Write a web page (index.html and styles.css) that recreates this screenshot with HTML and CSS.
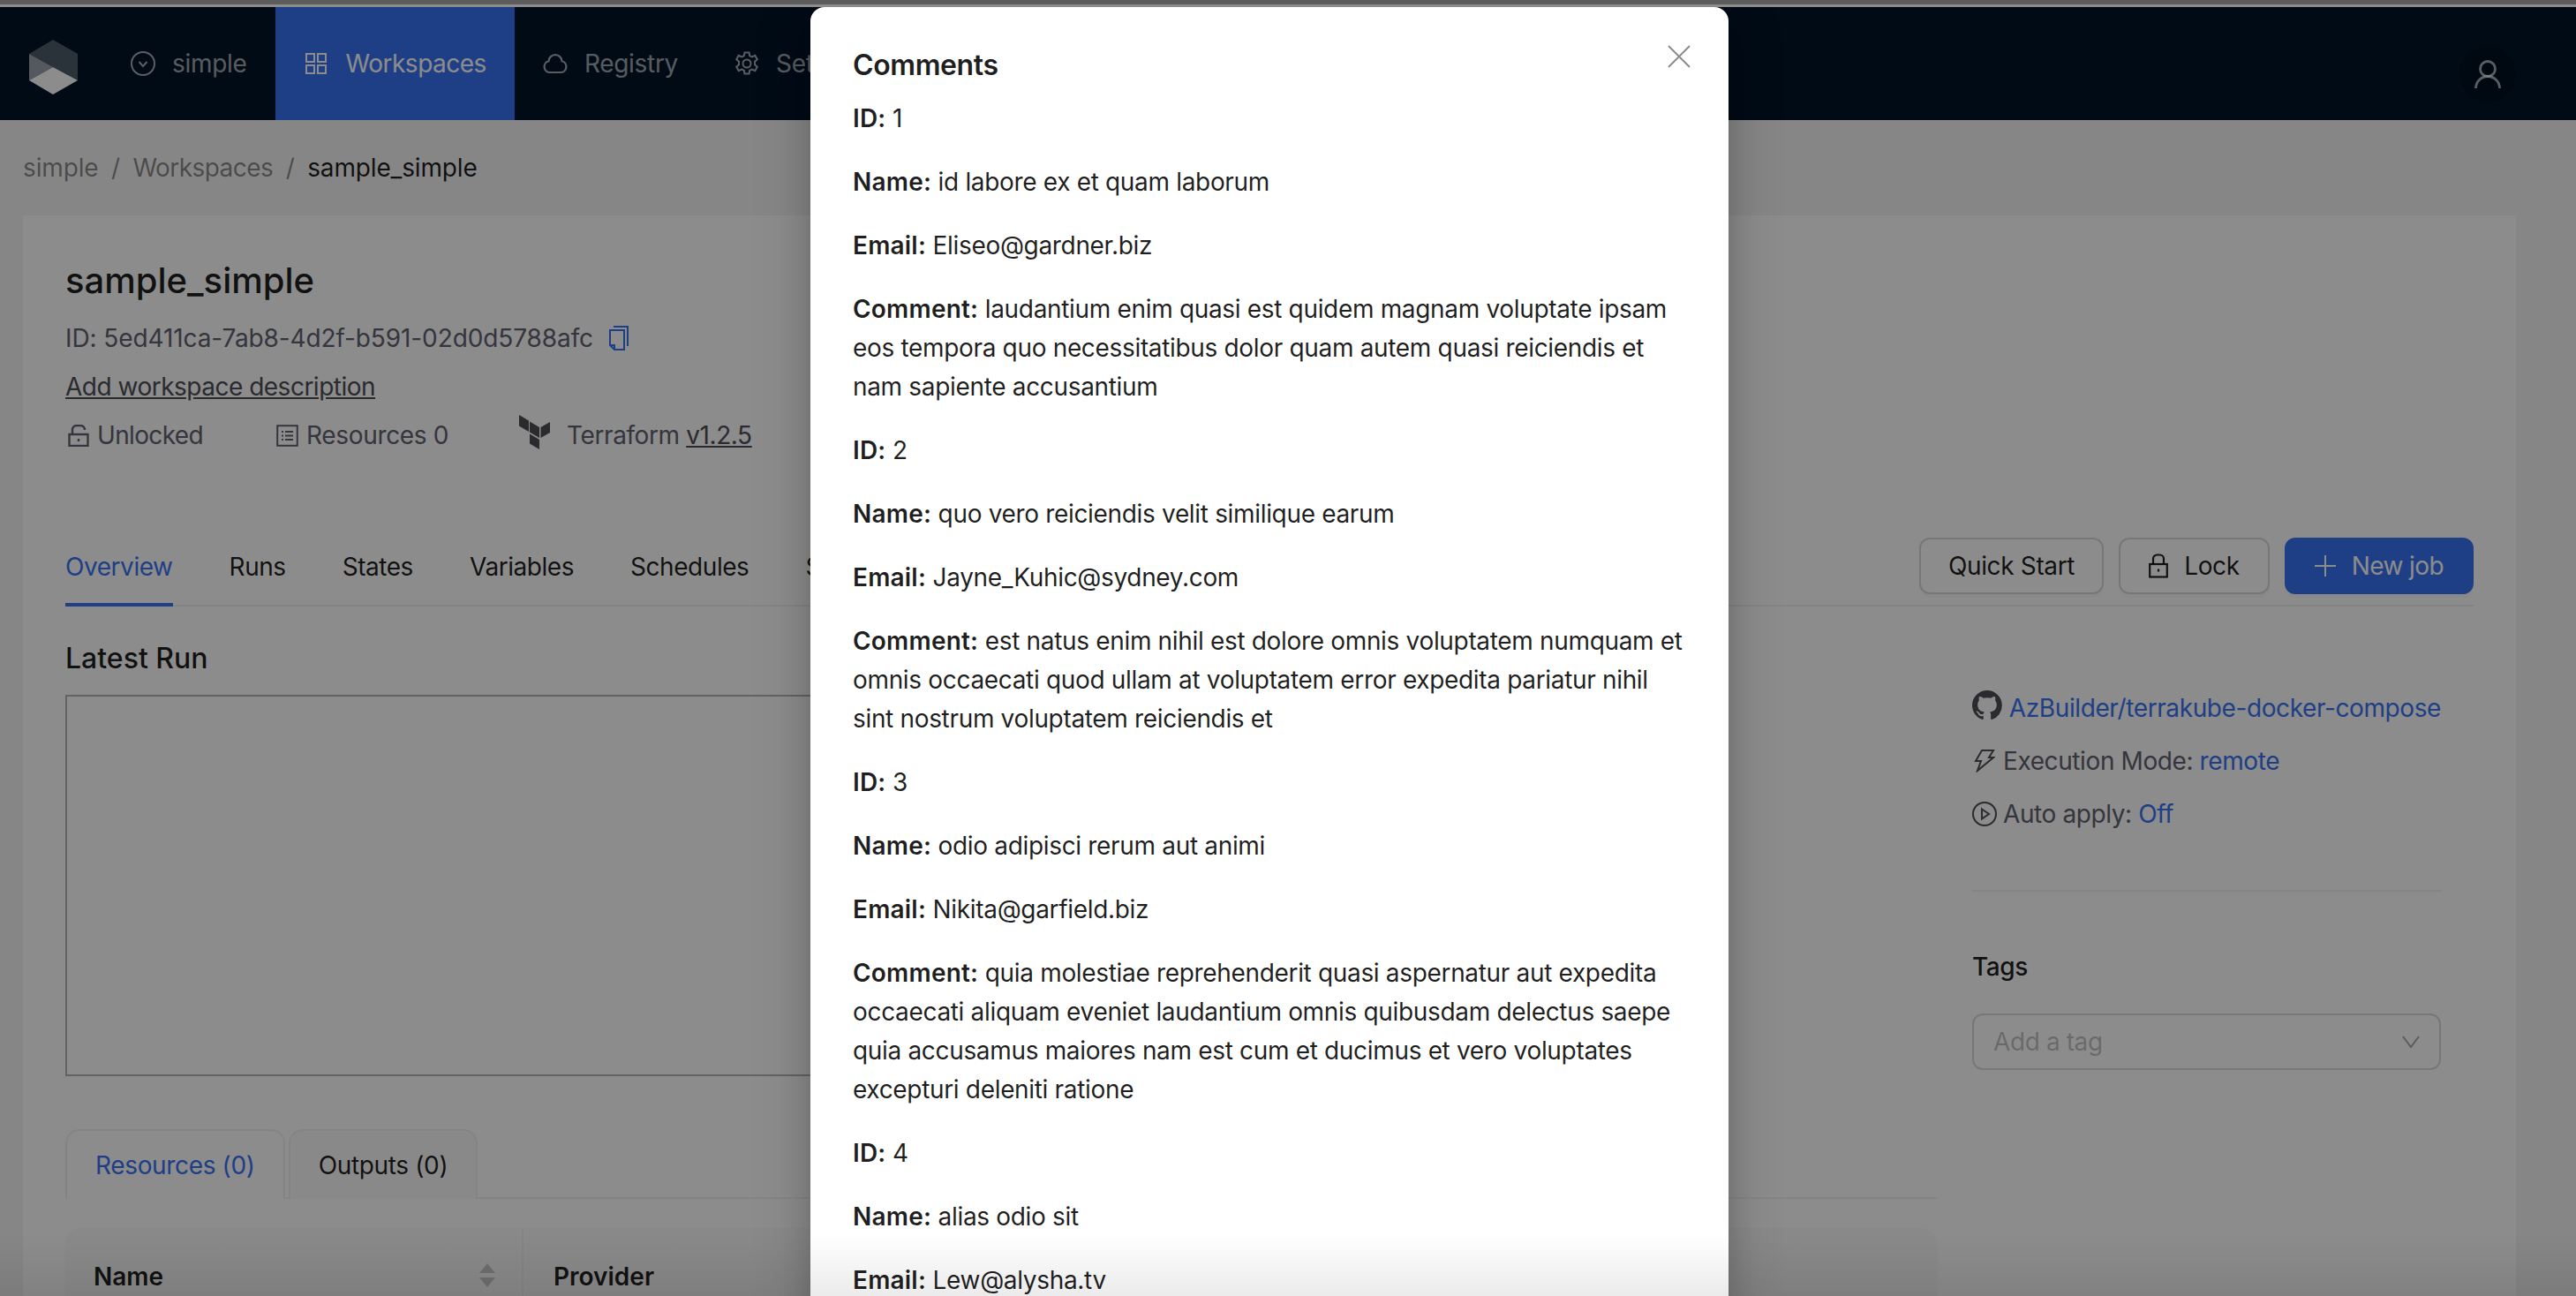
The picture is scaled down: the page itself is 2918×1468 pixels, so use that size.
FILE: index.html
```html
<!DOCTYPE html>
<html lang="en">
<head>
<meta charset="utf-8">
<title>sample_simple - Terrakube</title>
<link rel="stylesheet" href="styles.css">
</head>
<body>
<div class="strip"></div>
<header class="topbar">
  <div class="logo">
    <svg width="56" height="63" viewBox="0 0 56 63"><polygon fill="#4e5b6b" points="0,16 27,0 55,16 55,46 27,31"/><polygon fill="#9ca3ae" points="0,16 27,31 0,46"/><polygon fill="#ffffff" points="0,46 27,31 55,46 27,62"/></svg>
  </div>
  <a class="nav-item">
    <svg class="nav-ico" viewBox="0 0 28 28" fill="none" stroke="currentColor" stroke-width="2"><circle cx="14" cy="14" r="13"/><path d="M9.500 12l4.500 5 4.500-5"/></svg>
    <span>simple</span>
  </a>
  <a class="nav-item active">
    <svg class="nav-ico" viewBox="0 0 28 28" fill="none" stroke="currentColor" stroke-width="2"><rect x="3" y="3" width="9" height="9"/><rect x="16" y="3" width="9" height="9"/><rect x="3" y="16" width="9" height="9"/><rect x="16" y="16" width="9" height="9"/></svg>
    <span>Workspaces</span>
  </a>
  <a class="nav-item">
    <svg class="nav-ico" viewBox="0 0 28 28" fill="none" stroke="currentColor" stroke-width="2.200"><path d="M8 24h12a6.500 6.500 0 0 0 1.500-12.800A7.800 7.800 0 0 0 14 4a7.800 7.800 0 0 0-7.500 7.200A6.500 6.500 0 0 0 8 24z"/></svg>
    <span>Registry</span>
  </a>
  <a class="nav-item">
    <svg class="nav-ico" viewBox="0 0 28 28" fill="none" stroke="currentColor" stroke-width="2"><circle cx="14" cy="14" r="4.500"/><path d="M11.500 1.500h5l.8 3.800 2.500 1.200 3.500-1.600 2.500 4.300-2.800 2.600v3.400l2.800 2.600-2.500 4.300-3.500-1.600-2.500 1.200-.8 3.800h-5l-.8-3.800-2.500-1.200-3.500 1.600-2.500-4.300 2.800-2.600v-3.400L2.200 9.200l2.500-4.300 3.500 1.600 2.500-1.200z"/></svg>
    <span>Settings</span>
  </a>
  <div class="avatar">
    <svg width="30" height="32" viewBox="0 0 30 32" fill="none" stroke="currentColor" stroke-width="2.800"><circle cx="15" cy="10" r="8.500"/><path d="M1.500 32a13.500 13.500 0 0 1 27 0"/></svg>
  </div>
</header>

<main class="page">
  <nav class="crumbs">
    <span class="crumb">simple</span><span class="crumb-sep">/</span><span class="crumb wide">Workspaces</span><span class="crumb-sep">/</span><span class="crumb-now">sample_simple</span>
  </nav>

  <section class="card">
    <h1 class="ws-title">sample_simple</h1>
    <div class="ws-id">
      <span>ID: 5ed411ca-7ab8-4d2f-b591-02d0d5788afc</span>
      <svg class="copy" width="22" height="28" viewBox="0 0 22 28" fill="none" stroke="currentColor" stroke-width="2"><path d="M5 1h16v22"/><path d="M1 5h16v22H6l-5-5z"/><path d="M1 22h5v5"/></svg>
    </div>
    <div class="ws-desc"><a class="u-dark">Add workspace description</a></div>
    <div class="ws-meta">
      <span class="meta m-lock">
        <svg width="24" height="25" viewBox="0 0 24 25" fill="none" stroke="currentColor" stroke-width="2.400"><rect x="1.500" y="11" width="21" height="13"/><path d="M5 11V6a5 5 0 0 1 5-5h4a5 5 0 0 1 5 5"/><path d="M12 16v3"/></svg>
        Unlocked
      </span>
      <span class="meta m-res">
        <svg width="25" height="25" viewBox="0 0 25 25" fill="none" stroke="currentColor" stroke-width="2"><rect x="1.200" y="1.200" width="22.600" height="22.600"/><path d="M10 8h9M10 12.500h9M10 17h9M6 8h2M6 12.500h2M6 17h2"/></svg>
        Resources 0
      </span>
      <span class="meta m-tf">
        <svg class="tf" width="35" height="39" viewBox="0 0 35 39" fill="currentColor"><polygon points="0,0 11,6.500 11,19 0,12.500"/><polygon points="12,7.500 23,14 23,26 12,19.500"/><polygon points="35,8 24.500,14 24.500,26 35,20"/><polygon points="12,21.500 23,28 23,39 12,32.500"/></svg>
        <span>Terraform <a class="u-dark">v1.2.5</a></span>
      </span>
    </div>

    <div class="tabbar">
      <div class="tabs">
        <span class="tab on">Overview</span>
        <span class="tab">Runs</span>
        <span class="tab">States</span>
        <span class="tab">Variables</span>
        <span class="tab">Schedules</span>
        <span class="tab">Settings</span>
      </div>
      <div class="actions">
        <button class="btn plain">Quick Start</button>
        <button class="btn">
          <svg width="22" height="28" viewBox="0 0 22 28" fill="none" stroke="currentColor" stroke-width="2.200"><rect x="1.200" y="12" width="19.600" height="14.500"/><path d="M5 12V6a4.500 4.500 0 0 1 4.500-4.500h3A4.500 4.500 0 0 1 17 6v6"/><path d="M11 17.500v3"/></svg>
          Lock
        </button>
        <button class="btn primary">
          <svg width="24" height="24" viewBox="0 0 24 24" fill="none" stroke="currentColor" stroke-width="2"><path d="M12 0v24M0 12h24"/></svg>
          New job
        </button>
      </div>
    </div>

    <div class="columns">
      <div class="col-main">
        <h2 class="sub-title">Latest Run</h2>
        <div class="run-box"></div>
        <div class="card-tabs">
          <span class="card-tab on">Resources (0)</span>
          <span class="card-tab">Outputs (0)</span>
        </div>
        <div class="table-head">
          <div class="th th-name">
            <span>Name</span>
            <span class="sorter"><i class="up"></i><i class="down"></i></span>
          </div>
          <div class="th th-next">Provider</div>
        </div>
      </div>
      <aside class="col-side">
        <div class="side-row">
          <svg class="gh" width="36" height="36" viewBox="0 0 16 16" fill="currentColor"><path d="M8 0C3.580 0 0 3.580 0 8c0 3.540 2.290 6.530 5.470 7.590.4.070.55-.17.55-.38 0-.19-.01-.82-.01-1.490-2.010.37-2.530-.49-2.690-.94-.09-.23-.48-.94-.82-1.130-.28-.15-.68-.52-.01-.53.63-.01 1.080.58 1.230.82.72 1.210 1.870.87 2.330.66.07-.52.28-.87.51-1.070-1.780-.2-3.640-.89-3.640-3.950 0-.87.31-1.590.82-2.150-.08-.2-.36-1.020.08-2.120 0 0 .67-.21 2.200.82.64-.18 1.320-.27 2-.27.68 0 1.360.09 2 .27 1.530-1.040 2.200-.82 2.200-.82.44 1.100.16 1.920.08 2.120.51.56.82 1.270.82 2.150 0 3.070-1.870 3.750-3.650 3.950.29.25.54.73.54 1.480 0 1.070-.01 1.930-.01 2.200 0 .21.15.46.55.38A8.013 8.013 0 0 0 16 8c0-4.420-3.580-8-8-8z"/></svg>
          <a class="link">AzBuilder/terrakube-docker-compose</a>
        </div>
        <div class="side-row">
          <svg class="bolt" width="24" height="26" viewBox="0 0 24 26" fill="none" stroke="currentColor" stroke-width="2"><path d="M9 1h13l-5 8h5L4 24l4-11H2z"/></svg>
          <span>Execution Mode: <a class="link">remote</a></span>
        </div>
        <div class="side-row">
          <svg class="play" width="28" height="28" viewBox="0 0 28 28" fill="none" stroke="currentColor" stroke-width="2"><circle cx="14" cy="14" r="13"/><path d="M11 8.500l8 5.500-8 5.500z"/></svg>
          <span>Auto apply: <a class="link">Off</a></span>
        </div>
        <hr class="side-rule">
        <h3 class="tags-title">Tags</h3>
        <div class="select">
          <span>Add a tag</span>
          <svg width="20" height="14" viewBox="0 0 20 14" fill="none" stroke="currentColor" stroke-width="2"><path d="M1 1l9 12 9-12"/></svg>
        </div>
      </aside>
    </div>
  </section>
</main>

<div class="mask"></div>

<div class="modal">
  <button class="modal-close" aria-label="Close">
    <svg width="26" height="26" viewBox="0 0 26 26" fill="none" stroke="currentColor" stroke-width="2"><path d="M1 1l24 24M25 1L1 25"/></svg>
  </button>
  <h2 class="modal-title">Comments</h2>
  <p><b>ID:</b> 1</p>
  <p><b>Name:</b> id labore ex et quam laborum</p>
  <p><b>Email:</b> Eliseo@gardner.biz</p>
  <p><b>Comment:</b> laudantium enim quasi est quidem magnam voluptate ipsam eos tempora quo necessitatibus dolor quam autem quasi reiciendis et nam sapiente accusantium</p>
  <p><b>ID:</b> 2</p>
  <p><b>Name:</b> quo vero reiciendis velit similique earum</p>
  <p><b>Email:</b> Jayne_Kuhic@sydney.com</p>
  <p><b>Comment:</b> est natus enim nihil est dolore omnis voluptatem numquam et omnis occaecati quod ullam at voluptatem error expedita pariatur nihil sint nostrum voluptatem reiciendis et</p>
  <p><b>ID:</b> 3</p>
  <p><b>Name:</b> odio adipisci rerum aut animi</p>
  <p><b>Email:</b> Nikita@garfield.biz</p>
  <p><b>Comment:</b> quia molestiae reprehenderit quasi aspernatur aut expedita occaecati aliquam eveniet laudantium omnis quibusdam delectus saepe quia accusamus maiores nam est cum et ducimus et vero voluptates excepturi deleniti ratione</p>
  <p><b>ID:</b> 4</p>
  <p><b>Name:</b> alias odio sit</p>
  <p><b>Email:</b> Lew@alysha.tv</p>
</div>

<div class="bottom-fade"></div>
</body>
</html>
```

FILE: styles.css
```css
* { box-sizing: border-box; }
html, body { margin: 0; height: 1468px; overflow: hidden; }
body {
  position: relative;
  background: #f5f5f5;
  font-family: Inter, "Liberation Sans", sans-serif;
  font-size: 28px;
  line-height: 44px;
  color: rgba(0, 0, 0, .88);
}
a { color: inherit; }
h1, h2, h3, p { margin: 0; }

.strip {
  position: relative;
  z-index: 5;
  height: 8px;
  background: #5c5c5c;
  border-bottom: 3px solid #8c8c8c;
}

/* top navigation */
.topbar {
  display: flex;
  align-items: stretch;
  height: 128px;
  background: #001529;
  color: rgba(255, 255, 255, .65);
  letter-spacing: -.3px;
}
.logo { flex: none; width: 116px; padding: 37px 0 0 33px; }
.logo svg { display: block; }
.nav-item { display: flex; align-items: center; gap: 19px; padding: 0 32px; height: 128px; }
.nav-item.active { background: #3873f5; color: #fff; letter-spacing: -.5px; gap: 20px; }
.nav-ico { width: 28px; height: 28px; flex: none; }
.avatar {
  margin: 44px 68px 0 auto;
  width: 64px; height: 64px;
  border-radius: 50%;
  background: rgba(0, 0, 0, .15);
  display: flex; align-items: center; justify-content: center;
}

/* page */
.page { padding: 0 68px 0 26px; }
.crumbs { display: flex; gap: 14.500px; height: 108px; align-items: center; color: rgba(0, 0, 0, .45); letter-spacing: -.15px; }
.crumb.wide { letter-spacing: -.55px; }
.crumb-now { color: rgba(0, 0, 0, .88); }

.card { background: #fff; padding: 46px 48px 0; height: 1300px; }
.ws-title { font-size: 40px; line-height: 56px; font-weight: 500; }
.ws-id { display: flex; align-items: center; gap: 18px; margin-top: 15px; color: #626270; letter-spacing: -.1px; }
.copy { color: #3873f5; }
.ws-desc { margin-top: 11px; color: #4e4e57; letter-spacing: -.5px; }
.u-dark { color: #4e4e57; text-decoration: underline; }
.ws-meta { display: flex; align-items: center; margin-top: 11px; color: #626270; height: 44px; letter-spacing: -.4px; }
.meta { display: flex; align-items: center; }
.m-lock { gap: 9px; width: 239px; padding-left: 3px; letter-spacing: -.65px; }
.m-res { gap: 9px; width: 274px; letter-spacing: -.33px; }
.m-tf { gap: 19px; }
.tf { color: #4e4e57; margin: -8px 0 0 1px; }

/* primary tabs */
.tabbar {
  display: flex;
  justify-content: space-between;
  margin-top: 81px;
  height: 91px;
  border-bottom: 2px solid #f0f0f0;
}
.tabs { display: flex; gap: 64px; letter-spacing: -.45px; }
.tab { padding-top: 24px; height: 91px; }
.tab.on { color: #3873f5; border-bottom: 4px solid #3873f5; }
.actions { display: flex; gap: 17px; padding-top: 13px; }
.btn {
  display: flex; align-items: center; gap: 18px;
  height: 64px;
  padding: 0 32px;
  font: inherit;
  letter-spacing: -.35px;
  color: rgba(0, 0, 0, .88);
  background: #fff;
  border: 2px solid #d9d9d9;
  border-radius: 12px;
  box-shadow: 0 4px 0 rgba(0, 0, 0, .02);
}
.btn.plain { padding: 0 31px; }
.btn.primary { background: #3873f5; border-color: #3873f5; color: #fff; letter-spacing: -.6px; }

/* columns */
.columns { display: grid; grid-template-columns: 2120px 608px; }
.sub-title { font-size: 32px; line-height: 48px; font-weight: 500; margin-top: 35px; }
.run-box { margin-top: 17px; width: 1800px; height: 432px; border: 2px solid #b4b4b4; }
.card-tabs { display: flex; gap: 4px; margin-top: 60px; height: 79px; border-bottom: 2px solid #f0f0f0; letter-spacing: -.35px; }
.card-tab {
  height: 79px;
  padding: 17px 32px 0;
  background: #fafafa;
  border: 2px solid #f0f0f0;
  border-bottom: 0;
  border-radius: 16px 16px 0 0;
}
.card-tab.on { color: #3873f5; background: #fff; }
.table-head {
  display: flex;
  margin-top: 33px;
  height: 140px;
  background: #fafafa;
  border-radius: 16px 16px 0 0;
  font-weight: 600;
}
.th { padding: 33px 32px 0; }
.th-next { padding-left: 34px; }
.th-name {
  width: 519px;
  display: flex;
  justify-content: space-between;
  border-right: 2px solid #f0f0f0;
}
.sorter { display: flex; flex-direction: column; gap: 5px; margin: 7px -2px 0 0; }
.sorter i { display: block; width: 0; height: 0; border-left: 9px solid transparent; border-right: 9px solid transparent; }
.sorter .up { border-bottom: 11px solid rgba(0, 0, 0, .2); }
.sorter .down { border-top: 11px solid rgba(0, 0, 0, .2); }

/* right side */
.col-side { padding: 93px 37px 0 40px; color: #626270; min-width: 0; letter-spacing: -.4px; }
.side-row { display: flex; align-items: center; gap: 7px; height: 44px; margin-bottom: 16px; white-space: nowrap; }
.gh { margin: -6px 1px 0 0; color: #4e4e57; }
.bolt { margin-left: 2px; margin-right: 2px; color: #4e4e57; }
.play { color: #4e4e57; }
.link { color: #3873f5; }
.side-rule { margin: 64px 0 0; border: 0; border-top: 2px solid #f0f0f0; }
.tags-title { margin-top: 63px; font-size: 28px; line-height: 44px; font-weight: 500; color: rgba(0, 0, 0, .88); }
.select {
  margin-top: 31px;
  height: 64px;
  padding: 0 22px 0 22px;
  display: flex; align-items: center; justify-content: space-between;
  border: 2px solid #d9d9d9;
  border-radius: 12px;
  color: rgba(0, 0, 0, .25);
}
.select svg { color: rgba(0, 0, 0, .35); }

/* overlay and dialog */
.mask { position: absolute; inset: 0; background: rgba(0, 0, 0, .45); }
.modal {
  position: absolute;
  top: 8px; left: 918px;
  width: 1040px;
  height: 1600px;
  padding: 40px 48px;
  background: #fff;
  border-radius: 16px;
  letter-spacing: -.33px;
  box-shadow: 0 12px 32px rgba(0, 0, 0, .16), 0 18px 56px 16px rgba(0, 0, 0, .1);
}
.modal-title { font-size: 32px; line-height: 48px; font-weight: 600; padding-top: 2px; margin-bottom: 14px; letter-spacing: -.4px; }
.modal p { margin-bottom: 28px; }
.modal b { font-weight: 600; letter-spacing: .2px; }
.modal-close {
  position: absolute;
  top: 43px; right: 43px;
  padding: 0; border: 0; background: none;
  color: rgba(0, 0, 0, .45);
  display: flex;
}
.bottom-fade {
  position: absolute;
  left: 0; right: 0; bottom: 0;
  height: 70px;
  background: linear-gradient(to bottom, rgba(0, 0, 0, 0), rgba(0, 0, 0, .08));
  pointer-events: none;
}
```
